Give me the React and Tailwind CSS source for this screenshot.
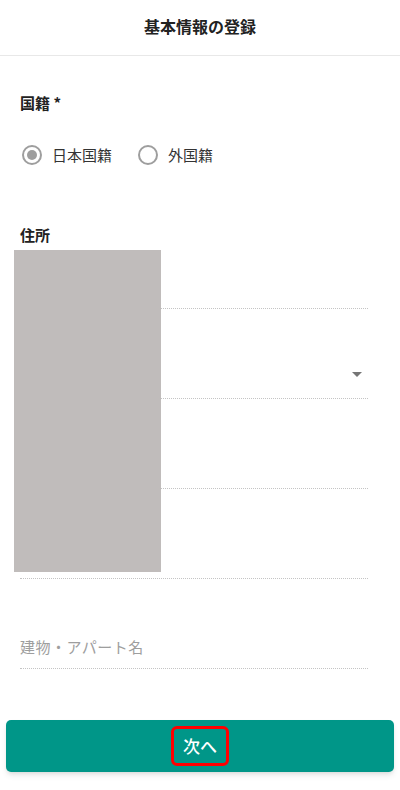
import React, { useState } from 'react';

const font = { fontFamily: '"Noto Sans CJK JP", "Noto Sans", sans-serif' };

const Radio = ({ checked, label, onClick }) => (
  <button type="button" onClick={onClick} className="flex items-center gap-[10px]">
    <span className="w-[20px] h-[20px] rounded-full border-2 border-[#9e9e9e] flex items-center justify-center">
      {checked && <span className="w-[10px] h-[10px] rounded-full bg-[#9e9e9e]"></span>}
    </span>
    <span className="text-[15px] text-[#333] leading-[24px]">{label}</span>
  </button>
);

const Field = ({ height, children }) => (
  <div className={`${height} border-b border-dotted border-[#c4c4c4] flex items-end justify-between`}>
    {children}
  </div>
);

const App = () => {
  const [nationality, setNationality] = useState('jp');

  return (
    <div className="w-[400px] h-[790px] bg-white relative overflow-hidden" style={font}>
      <div className="h-[56px] pb-[4px] flex items-center justify-center border-b border-[#e8e8e8]">
        <h1 className="text-[16px] font-bold text-[#222]">基本情報の登録</h1>
      </div>

      <div className="px-5">
        <div className="mt-[36px] text-[15px] font-bold text-[#222] leading-[22px]">国籍 *</div>

        <div className="mt-[29px] flex items-center gap-[26px] pl-[2px]">
          <Radio checked={nationality === 'jp'} label="日本国籍" onClick={() => setNationality('jp')} />
          <Radio checked={nationality === 'other'} label="外国籍" onClick={() => setNationality('other')} />
        </div>

        <div className="mt-[57px] text-[15px] font-bold text-[#222] leading-[22px]">住所</div>

        <div className="mr-[12px]">
          <Field height="h-[63px]" />
          <Field height="h-[90px]">
            <span></span>
            <svg width="10" height="6" viewBox="0 0 10 6" className="mb-[20px] mr-[6px]">
              <path d="M0 0 L10 0 L5 5 Z" fill="#757575" />
            </svg>
          </Field>
          <Field height="h-[90px]" />
          <Field height="h-[90px]" />
          <Field height="h-[90px]">
            <span className="text-[15px] text-[#9e9e9e] leading-[22px] mb-[10px] tracking-[0.5px]">建物・アパート名</span>
          </Field>
        </div>
      </div>

      {/* redacted area */}
      <div className="absolute left-[14px] top-[250px] w-[147px] h-[322px] bg-[#c0bcbb]"></div>

      <div className="px-[6px] mt-[51px]">
        <button type="button" className="w-full h-[52px] rounded-[5px] bg-[#009688] shadow-md flex items-center justify-center">
          <span className="h-[40px] px-[9px] border-[3px] border-[#ff0000] rounded-[6px] flex items-center text-white text-[17px] font-medium">
            次へ
          </span>
        </button>
      </div>
    </div>
  );
};

export default App;
